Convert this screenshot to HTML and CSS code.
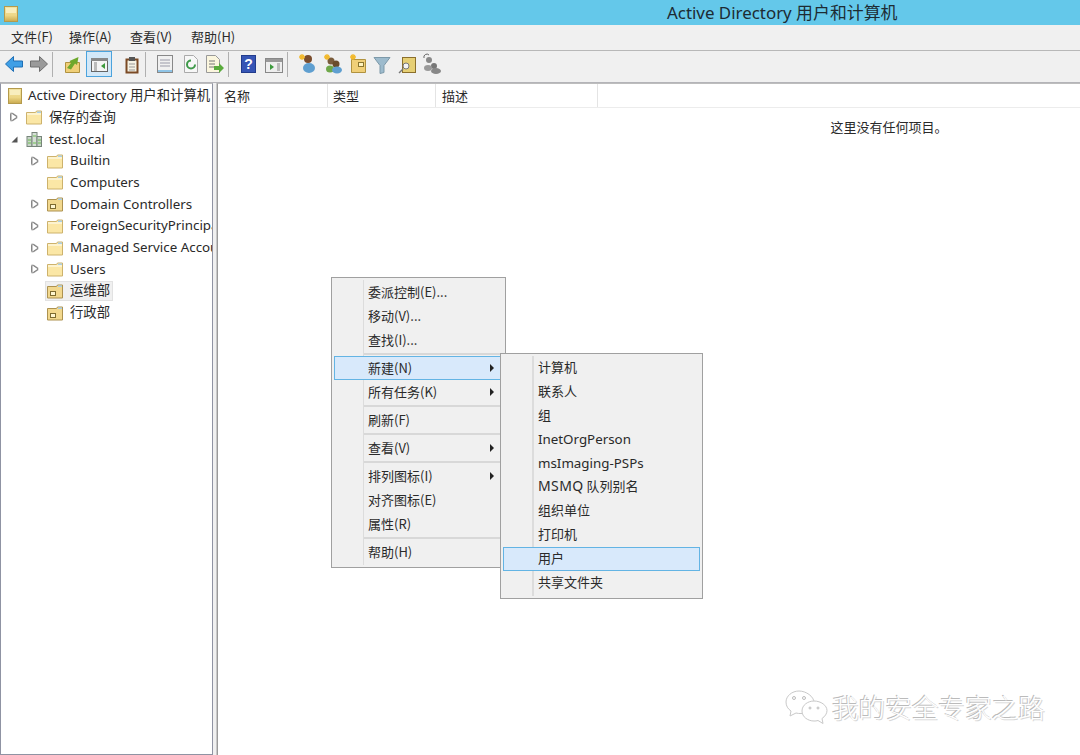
FILE: index.html
```html
<!DOCTYPE html>
<html lang="zh-CN">
<head>
<meta charset="utf-8">
<title>Active Directory 用户和计算机</title>
<link rel="stylesheet" href="styles.css">
</head>
<body>
<div class="window">
  <header class="titlebar">
    <svg class="ti" width="19" height="19" viewBox="0 0 19 19"><defs><linearGradient id="book" x1="0" y1="0" x2="0" y2="1"><stop offset="0" stop-color="#f3e3a2"/><stop offset=".6" stop-color="#ecd685"/><stop offset="1" stop-color="#c9a94e"/></linearGradient></defs><rect x="2.500" y="2.500" width="13" height="15" fill="url(#book)" stroke="#b49a4c"/><rect x="4" y="4" width="10" height="5" fill="#f8eebd"/></svg>
    <div class="title">Active Directory 用户和计算机</div>
  </header>
  <nav class="menubar">
    <span class="m1">文件(F)</span><span class="m2">操作(A)</span><span class="m3">查看(V)</span><span class="m4">帮助(H)</span>
  </nav>
  <div class="toolbar">
    <svg class="tb" width="480" height="31" viewBox="0 0 480 31">
      <g transform="translate(0,-2)">
      <path d="M5.500 15 l8-7.500 v4.500 h9 v6 h-9 v4.500z" fill="#3f9fe6" stroke="#1f6fb5"/>
      <path d="M47.500 15 l-8-7.500 v4.500 h-9 v6 h9 v4.500z" fill="#9a9a9a" stroke="#6e6e6e"/>
      <rect x="52" y="3" width="1" height="25" fill="#b0b0b0"/>
      <path d="M65.500 13.500 h14 v10 h-14z" fill="#f0cf78" stroke="#b0923f"/><path d="M67 19 l4-5 -1.500-2 9-4 -1.500 8 -2-1.500 -4 6z" fill="#6ea82c"/>
      <rect x="86.500" y="2.500" width="25" height="25" fill="#d3e8f8" stroke="#4ba3dd"/>
      <rect x="91.500" y="9.500" width="16" height="13" fill="#f4f4f4" stroke="#666"/><rect x="91" y="9" width="17" height="3" fill="#888"/><path d="M94 13h3v9h-3z" fill="#bbb"/><path d="M105 14v6l-4-3z" fill="#3d9a3d"/>
      <rect x="126.500" y="10.500" width="11" height="13" fill="#f5f2e4" stroke="#7b4a25" stroke-width="2"/><rect x="129" y="8" width="6" height="4" fill="#555"/><path d="M129 15h6M129 18h6M129 21h6" stroke="#999"/>
      <rect x="145" y="3" width="1" height="25" fill="#b0b0b0"/>
      <rect x="157.500" y="6.500" width="15" height="17" fill="#f0f0f0" stroke="#888"/><path d="M160 11h10M160 14h10M160 17h10" stroke="#9a9aa8"/><rect x="158" y="21" width="14" height="2" fill="#8fc4e6"/>
      <path d="M184.500 6.500h9l4 4v13h-13z" fill="#f7f7f7" stroke="#aaa"/><path d="M191 11.500a4 4 0 1 0 4 4" fill="none" stroke="#3f9a4a" stroke-width="2"/>
      <path d="M206.500 6.500h9l4 4v13h-13z" fill="#fbf6de" stroke="#999"/><path d="M209 12h6M209 15h6M209 18h6" stroke="#777"/><path d="M214 17h5v-3l5 5 -5 5v-3h-5z" fill="#5aab3c"/>
      <rect x="228" y="3" width="1" height="25" fill="#b0b0b0"/>
      <rect x="241.500" y="6.500" width="14" height="17" fill="#3655b5" stroke="#223c8c"/><text x="248.500" y="20" class="q">?</text>
      <rect x="265.500" y="9.500" width="17" height="14" fill="#eee" stroke="#888"/><rect x="266" y="10" width="16" height="3" fill="#999"/><path d="M270 15v6l4-3z" fill="#3d9a3d"/><path d="M277 14h3v8h-3z" fill="#bbb"/>
      <rect x="287" y="3" width="1" height="25" fill="#b0b0b0"/>
      <circle cx="308" cy="10" r="4" fill="#7a4c2c"/><ellipse cx="309" cy="19" rx="6" ry="5" fill="#5f9fd0"/><path d="M299 8h6M302 5v6M300 6l4 4M304 6l-4 4" stroke="#f2b92c" stroke-width="1.300"/>
      <circle cx="331" cy="12" r="3.500" fill="#7a5c3c"/><circle cx="336" cy="15" r="3.500" fill="#6a4c2c"/><ellipse cx="330" cy="20" rx="4" ry="3.500" fill="#6fa84a"/><ellipse cx="337" cy="21" rx="5" ry="3.500" fill="#5f9fd0"/><path d="M324 8h6M327 5v6M325 6l4 4M329 6l-4 4" stroke="#f2b92c" stroke-width="1.300"/>
      <path d="M351.500 10.500h14v13h-14z" fill="#f0cf78" stroke="#b0923f"/><rect x="358.500" y="13.500" width="5" height="4" fill="#fff3c0" stroke="#8a7530"/><path d="M350 8h6M353 5v6M351 6l4 4M355 6l-4 4" stroke="#f2b92c" stroke-width="1.300"/>
      <path d="M374 8.500h16l-6 8v7l-4 1v-8z" fill="#9dbbcd" stroke="#7d99a9"/>
      <rect x="402.500" y="8.500" width="13" height="15" fill="#e6cf74" stroke="#8b6f2c"/><circle cx="406" cy="17" r="3" fill="#f4f4f4" stroke="#777"/><path d="M403 20l-4 4" stroke="#777" stroke-width="1.500"/>
      <circle cx="429" cy="11" r="3" fill="#888"/><circle cx="434" cy="17" r="3" fill="#777"/><ellipse cx="428" cy="19" rx="4" ry="3" fill="#999"/><ellipse cx="436" cy="22" rx="5" ry="3" fill="#888"/><path d="M424 9a3 3 0 0 1 5-3" fill="none" stroke="#666"/>
      </g>
    </svg>
  </div>
  <main class="panes">
    <aside class="tree">
      <div class="row root"><svg class="fi" width="16" height="16" viewBox="0 0 16 16"><rect x="1.500" y="0.500" width="13" height="15" fill="url(#book)" stroke="#b49a4c"/><rect x="3" y="2" width="10" height="5" fill="#f8eebd"/></svg><span class="txt">Active Directory 用户和计算机</span></div>
      <div class="row l1"><i class="tw"></i><svg class="fi"><use href="#folder"/></svg><span class="txt">保存的查询</span></div>
      <div class="row l1"><i class="tw open"></i><svg class="fi" width="18" height="16" viewBox="0 0 16 16"><rect x="1" y="5.500" width="5" height="10" fill="#c8d4c8" stroke="#77857a"/><rect x="6" y="1.500" width="5" height="14" fill="#d6dfd6" stroke="#77857a"/><rect x="11" y="5.500" width="4.500" height="10" fill="#c8d4c8" stroke="#77857a"/><path d="M2 9h3M7 5h3M12 9h3M2 12h3M7 12h3M12 12h3" stroke="#6bbf4f"/></svg><span class="txt">test.local</span></div>
      <div class="row l2"><i class="tw"></i><svg class="fi"><use href="#folder"/></svg><span class="txt">Builtin</span></div>
      <div class="row l2"><i class="tw none"></i><svg class="fi"><use href="#folder"/></svg><span class="txt">Computers</span></div>
      <div class="row l2"><i class="tw"></i><svg class="fi"><use href="#ou"/></svg><span class="txt">Domain Controllers</span></div>
      <div class="row l2"><i class="tw"></i><svg class="fi"><use href="#folder"/></svg><span class="txt">ForeignSecurityPrincipals</span></div>
      <div class="row l2"><i class="tw"></i><svg class="fi"><use href="#folder"/></svg><span class="txt">Managed Service Accounts</span></div>
      <div class="row l2"><i class="tw"></i><svg class="fi"><use href="#folder"/></svg><span class="txt">Users</span></div>
      <div class="row l2"><i class="tw none"></i><div class="sel"><svg class="fi"><use href="#ou"/></svg><span class="txt">运维部</span></div></div>
      <div class="row l2"><i class="tw none"></i><svg class="fi"><use href="#ou"/></svg><span class="txt">行政部</span></div>
    </aside>
    <section class="list">
      <div class="cols"><div class="col c1">名称</div><div class="col c2">类型</div><div class="col c3">描述</div></div>
      <div class="empty">这里没有任何项目。</div>
    </section>
  </main>
</div>

<svg class="defs" width="0" height="0">
  <symbol id="folder" viewBox="0 0 16 16"><path d="M.5 3.500h9l1-1.500h5v13h-15z" fill="#fbe7a6" stroke="#cdb26c"/><rect x="11" y="2.500" width="4" height="1.500" fill="#a9cfe8"/><rect x="1" y="4" width="14" height="2" fill="#fdf3cf"/></symbol>
  <symbol id="ou" viewBox="0 0 16 16"><path d="M.5 3.500h9l1-1.500h5v13h-15z" fill="#f2d88e" stroke="#ad9250"/><rect x="11" y="2.500" width="4" height="1.500" fill="#a9cfe8"/><rect x="3.500" y="8.500" width="5" height="4" fill="#fff6cf" stroke="#7c6a30"/></symbol>
</svg>

<div class="menu ctx">
  <div class="item">委派控制(E)...</div>
  <div class="item">移动(V)...</div>
  <div class="item">查找(I)...</div>
  <div class="sep"></div>
  <div class="item hot arrow">新建(N)</div>
  <div class="item arrow">所有任务(K)</div>
  <div class="sep"></div>
  <div class="item">刷新(F)</div>
  <div class="sep"></div>
  <div class="item arrow">查看(V)</div>
  <div class="sep"></div>
  <div class="item arrow">排列图标(I)</div>
  <div class="item">对齐图标(E)</div>
  <div class="item">属性(R)</div>
  <div class="sep"></div>
  <div class="item">帮助(H)</div>
</div>

<div class="menu sub">
  <div class="item">计算机</div>
  <div class="item">联系人</div>
  <div class="item">组</div>
  <div class="item"><span class="lat">InetOrgPerson</span></div>
  <div class="item"><span class="lat">msImaging-PSPs</span></div>
  <div class="item"><span class="lat wide">MSMQ</span> 队列别名</div>
  <div class="item">组织单位</div>
  <div class="item">打印机</div>
  <div class="item hot">用户</div>
  <div class="item">共享文件夹</div>
</div>

<div class="mark">
  <svg width="44" height="38" viewBox="0 0 44 38"><g fill="#fff" stroke="#c9c9c9" stroke-width="1"><path d="M14 3c-7 0-13 5-13 11 0 4 2 7 5 9l-1 5 6-3c2 .5 3 .5 5 .5 7 0 13-5 13-11S21 3 14 3z"/><path d="M29 13c-6 0-12 4-12 10s6 10 12 10c1 0 3 0 4-.5l5 3-1-5c3-2 5-5 5-8 0-5-6-9.500-13-9.500z"/></g><g fill="#fff" stroke="#bbb"><circle cx="9" cy="10" r="1.500"/><circle cx="19" cy="10" r="1.500"/><circle cx="25" cy="20" r="1"/><circle cx="33" cy="20" r="1"/></g></svg>
  <span>我的安全专家之路</span>
</div>
```
FILE: styles.css
```css
html, body { margin: 0; padding: 0; }
body {
  width: 1080px; height: 755px; overflow: hidden; position: relative; background: #fff;
  font-family: "Noto Sans CJK SC", "Noto Sans", sans-serif; font-size: 13px; color: #2a2a2a;
}
.window { display: flex; flex-direction: column; height: 755px; }
.titlebar { height: 25px; background: #64c8ea; display: flex; align-items: center; position: relative; flex: none; }
.ti { margin-left: 2px; margin-top: 1px; }
.title { position: absolute; left: 667px; top: 1px; font-size: 16.900px; line-height: 23px; color: #1d2b33; white-space: nowrap; font-family: "Noto Sans", "Noto Sans CJK SC", sans-serif; }
.menubar { height: 26px; background: #f0f0f0; display: flex; align-items: center; padding: 0 0 2px 11px; flex: none; border-bottom: 1px solid #b8b8b8; box-sizing: border-box; }
.menubar span { white-space: nowrap; }
.m1 { width: 58px; } .m2 { width: 61px; } .m3 { width: 61px; }
.toolbar { height: 32px; background: #f0f0f0; flex: none; border-bottom: 1px solid #b4b4b8; box-sizing: border-box; }
.tb { display: block; }
.q { font: bold 14px "Liberation Sans", sans-serif; fill: #fff; text-anchor: middle; }
.panes { flex: 1; display: flex; background: #f0f0f0; min-height: 0; }
.tree { width: 213px; box-sizing: border-box; background: #fff; border: 1px solid #8f93a3; border-top-color: #bdbdbd; overflow: hidden; padding-top: .9px; flex: none; }
.row { height: 21.700px; display: flex; align-items: center; white-space: nowrap; font-family: "Noto Sans", "Noto Sans CJK SC", sans-serif; font-size: 13.350px; }
.txt { padding: 0 2px; line-height: 19px; }
.root { padding-left: 6px; }
.l1 { padding-left: 10px; }
.l2 { padding-left: 31px; }
.tw { width: 0; height: 0; border-left: 6px solid #fff; border-top: 4px solid transparent; border-bottom: 4px solid transparent; position: relative; margin-right: 9px; flex: none; filter: drop-shadow(1px 0 0 #777) drop-shadow(-1px 0 0 #777) drop-shadow(0 -1px 0 #888) drop-shadow(0 1px 0 #888); transform: scale(.85); }
.tw.open { border-left: 7px solid transparent; border-top: 0 solid transparent; border-bottom: 7px solid #555; filter: none; margin-right: 8px; }
.tw.none { border-color: transparent; filter: none; }
.fi { width: 16px; height: 16px; margin-right: 5px; flex: none; }
.root .fi { margin-right: 3px; }
.sel { display: flex; align-items: center; background: #f0f0f0; border: 1px solid #e2e2e2; margin-left: -2px; padding-left: 1px; height: 20px; box-sizing: border-box; }
.list { flex: 1; margin-left: 4px; background: #fff; border-left: 1px solid #9a9a9a; box-shadow: -1px 0 0 #c8c8c8; border-top: 1px solid #bdbdbd; position: relative; }
.cols { display: flex; height: 24px; box-sizing: border-box; border-bottom: 1px solid #ececec; }
.col { box-sizing: border-box; height: 23px; line-height: 23px; padding-left: 6px; border-right: 1px solid #e4e4e4; }
.c1 { width: 110px; } .c2 { width: 108px; padding-left: 5px; } .c3 { width: 162px; }
.empty { text-align: center; padding-top: 10px; padding-left: 480px; line-height: 18px; }
.menu { position: absolute; background: #f0f0f0; border: 1px solid #a0a0a0; box-sizing: border-box; padding: 2px; background-image: linear-gradient(#dcdcdc, #dcdcdc); background-repeat: no-repeat; background-size: 1px calc(100% - 4px); background-position: 31px 2px; }
.ctx { left: 331px; top: 277px; width: 175px; height: 291px; z-index: 1; }
.sub { left: 500px; top: 353px; width: 203px; height: 246px; z-index: 2; background-size: 2px calc(100% - 4px); }
.item { height: 24px; line-height: 21px; padding-left: 34px; border: 1px solid transparent; box-sizing: border-box; white-space: nowrap; position: relative; font-size: 13px; }
.ctx .item { padding-left: 33px; }
.sub .item { height: 23.900px; line-height: 20px; }
.lat { font-family: "Noto Sans", sans-serif; font-size: 13.350px; }
.lat.wide { font-size: 14px; letter-spacing: .4px; }
.item.hot { background: #d8e9fb; border-color: #63b4e4; }
.arrow::after { content: ""; position: absolute; right: 8px; top: 7px; border-left: 4px solid #222; border-top: 4px solid transparent; border-bottom: 4px solid transparent; }
.sep { height: 2px; margin: 1px 0 1px 30px; background: #d8d8d8; }
.defs { position: absolute; }
.mark { position: absolute; left: 785px; top: 687px; display: flex; align-items: center; gap: 3px; }
.mark span { font-size: 26.600px; line-height: 40px; color: #fff; text-shadow: -1px -1px 0 #bbb, 1px 1px 0 #d8d8d8; white-space: nowrap; font-weight: 300; }
```
